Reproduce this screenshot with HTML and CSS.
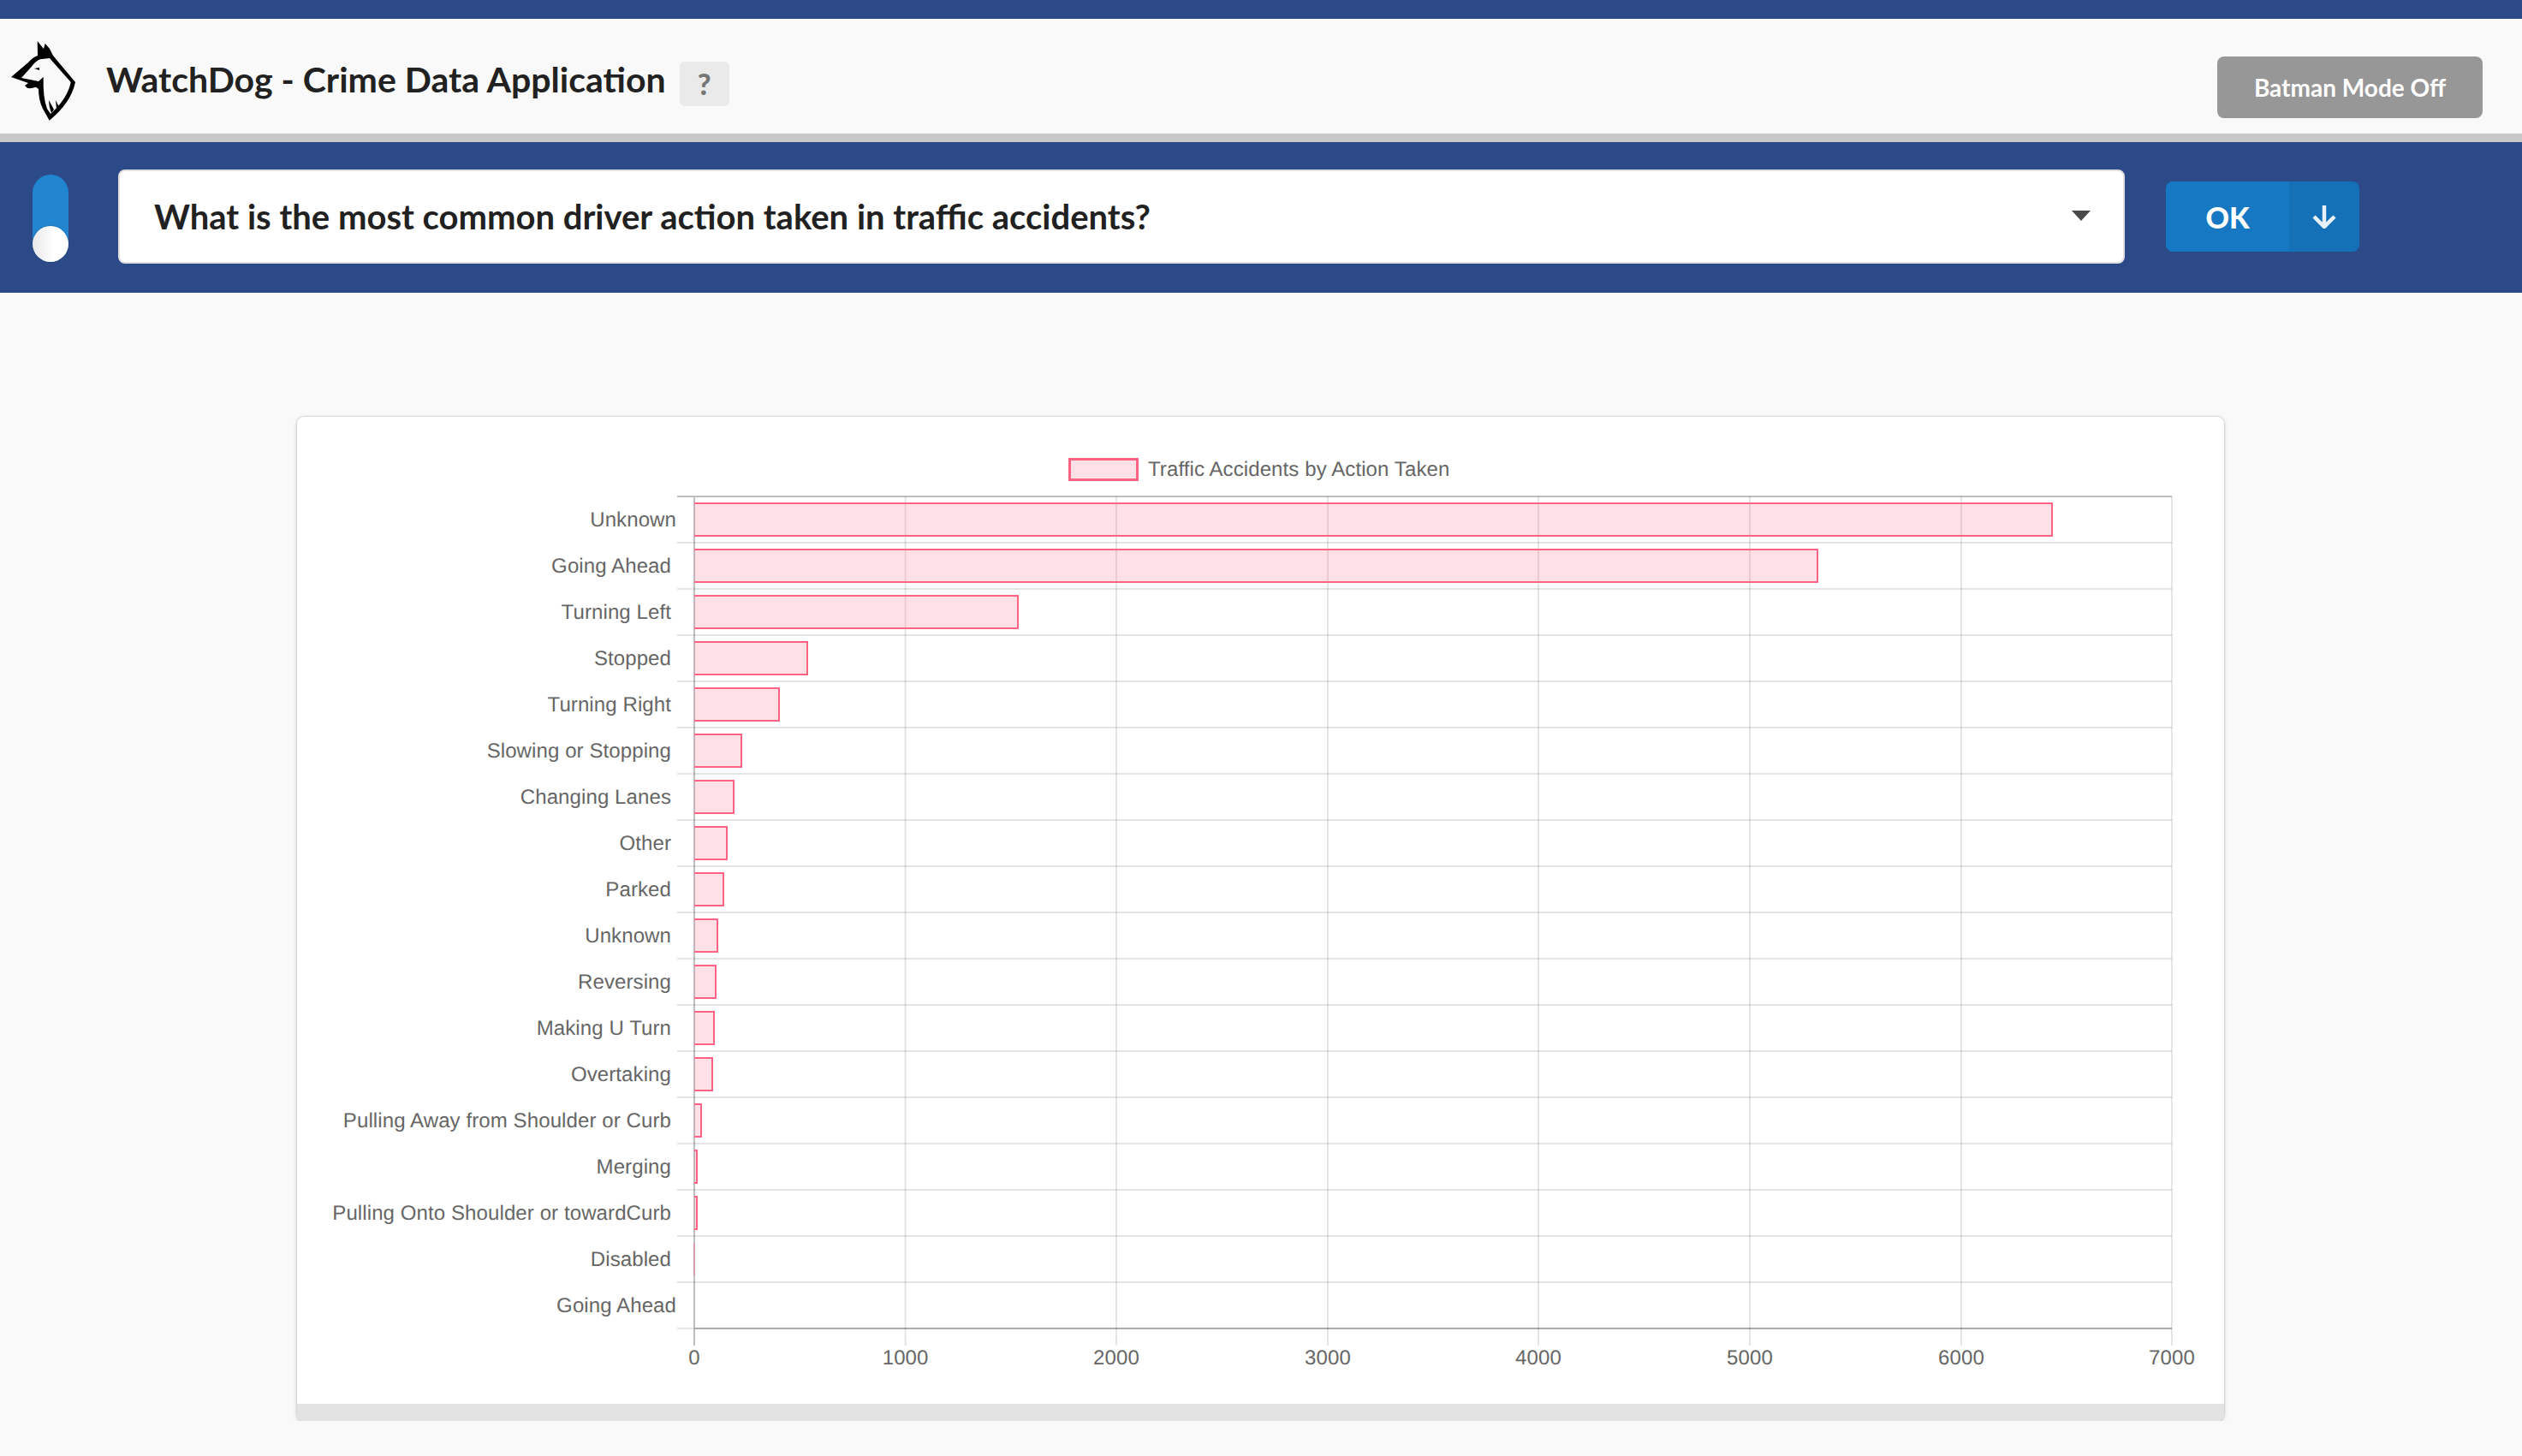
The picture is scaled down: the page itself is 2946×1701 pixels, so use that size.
FILE: index.html
```html
<!DOCTYPE html>
<html lang="en">
<head>
  <meta charset="UTF-8">
  <title>WatchDog - Crime Data Application</title>
  <link rel="stylesheet" href="styles.css">
</head>
<body>

<header class="topbar">
  <svg class="logo" viewBox="0 0 110 120" aria-hidden="true">
    <path class="logo-ink" d="M43.700 18 L51 27 L52.700 20.700 L58 27 L62 35 L88 66 Q83 90 57.700 110.700 L50 97 Q45 87 45 74 L41.700 71.700 Q36 74 31.700 72.700 L29 70 L33 67 L13 60 L33 43 Q38 37 44 35 Z"/>
    <path class="logo-face" d="M46.700 39.300 L58 38 L82.700 66 Q79 85 59 103 L55 97 Q50 84 50.700 60 L45 65 L25 61 L36.700 48 Q41 42 46.700 39.300 Z"/>
    <path class="logo-ink" d="M57 87 L63 98 L60 102 Q57 95 57 87 Z M65 87 L69 95 L66 97 Z M40 50 L46 49 L46 52 Z"/>
  </svg>
  <h1 class="app-title">WatchDog - Crime Data Application</h1>
  <span class="help-btn">?</span>
  <button class="batman-btn">Batman Mode Off</button>
</header>

<section class="toolbar">
  <div class="toggle"><span class="toggle-knob"></span></div>
  <div class="question">
    <span>What is the most common driver action taken in traffic accidents?</span>
    <i class="caret"></i>
  </div>
  <div class="ok-btn">
    <span class="ok-label">OK</span>
    <span class="ok-icon">
      <svg viewBox="0 0 28 28" aria-hidden="true"><path d="M14 1 V26 M2 14 L14 26 L26 14"/></svg>
    </span>
  </div>
</section>

<section class="card">
  <svg class="chart" viewBox="347 487 2251 1153" role="img">
    <!-- legend -->
    <rect class="bar bar-legend" x="1249.500" y="536.500" width="79" height="24"/>
    <text class="tick" x="1341" y="556">Traffic Accidents by Action Taken</text>

    <!-- grid -->
    <path class="grid" d="M1057.600 580 V1572 M1304 580 V1572 M1551 580 V1572 M1797 580 V1572 M2044 580 V1572 M2291 580 V1572 M2537 580 V1572"/>
    <path class="grid" d="M791 634 H2537 M791 688 H2537 M791 742 H2537 M791 796 H2537 M791 850 H2537 M791 904 H2537 M791 958 H2537 M791 1012 H2537 M791 1066 H2537 M791 1120 H2537 M791 1174 H2537 M791 1228 H2537 M791 1282 H2537 M791 1336 H2537 M791 1390 H2537 M791 1444 H2537 M791 1498 H2537 M791 1552 H2537"/>
    <path class="axis" d="M791 580 H2537 M811 580 V1572 M811 1552 H2537"/>

    <!-- bars -->
    <path class="bar" d="M811 588 H2397 V626 H811"/>
    <path class="bar" d="M811 642 H2123 V680 H811"/>
    <path class="bar" d="M811 696 H1189 V734 H811"/>
    <path class="bar" d="M811 750 H943 V788 H811"/>
    <path class="bar" d="M811 804 H910 V842 H811"/>
    <path class="bar" d="M811 858 H866 V896 H811"/>
    <path class="bar" d="M811 912 H857 V950 H811"/>
    <path class="bar" d="M811 966 H849 V1004 H811"/>
    <path class="bar" d="M811 1020 H845 V1058 H811"/>
    <path class="bar" d="M811 1074 H838 V1112 H811"/>
    <path class="bar" d="M811 1128 H836 V1166 H811"/>
    <path class="bar" d="M811 1182 H834 V1220 H811"/>
    <path class="bar" d="M811 1236 H832 V1274 H811"/>
    <path class="bar" d="M811 1290 H819 V1328 H811"/>
    <path class="bar" d="M811 1344 H814 V1382 H811"/>
    <path class="bar" d="M811 1398 H814 V1436 H811"/>
    <path class="bar bar-faint" d="M811 1452 V1490"/>

    <!-- y labels -->
    <g class="tick tick-end">
      <text x="790" y="615">Unknown</text>
      <text x="784" y="669">Going Ahead</text>
      <text x="784" y="723">Turning Left</text>
      <text x="784" y="777">Stopped</text>
      <text x="784" y="831">Turning Right</text>
      <text x="784" y="885">Slowing or Stopping</text>
      <text x="784" y="939">Changing Lanes</text>
      <text x="784" y="993">Other</text>
      <text x="784" y="1047">Parked</text>
      <text x="784" y="1101">Unknown</text>
      <text x="784" y="1155">Reversing</text>
      <text x="784" y="1209">Making U Turn</text>
      <text x="784" y="1263">Overtaking</text>
      <text x="784" y="1317">Pulling Away from Shoulder or Curb</text>
      <text x="784" y="1371">Merging</text>
      <text x="784" y="1425">Pulling Onto Shoulder or towardCurb</text>
      <text x="784" y="1479">Disabled</text>
      <text x="790" y="1533">Going Ahead</text>
    </g>

    <!-- x labels -->
    <g class="tick tick-mid">
      <text x="811" y="1594">0</text>
      <text x="1057.600" y="1594">1000</text>
      <text x="1304" y="1594">2000</text>
      <text x="1551" y="1594">3000</text>
      <text x="1797" y="1594">4000</text>
      <text x="2044" y="1594">5000</text>
      <text x="2291" y="1594">6000</text>
      <text x="2537" y="1594">7000</text>
    </g>
  </svg>
  <div class="card-foot"></div>
</section>

</body>
</html>
```

FILE: styles.css
```css
body { margin: 0; background: #f9f9f9; font-family: "Lato", "Liberation Sans", sans-serif; color: #212121; }

.topbar { display: flex; align-items: center; height: 134px; border-top: 22px solid #2b4a87; border-bottom: 10px solid #c8c8c8; padding: 0 46px 0 0; }
.logo { width: 110px; height: 120px; flex: none; margin-top: 2px; }
.logo-ink { fill: #000; }
.logo-face { fill: #f9f9f9; }
.app-title { margin: 7px 0 0 14px; font-size: 41px; font-weight: 700; line-height: 1; }
.help-btn { width: 58px; height: 52px; margin: 18px 0 0 16px; border-radius: 6px; background: #eaeaea; color: #767676; font-size: 34px; font-weight: 900; line-height: 52px; text-align: center; }
.batman-btn { width: 310px; height: 72px; margin: 26px 0 0 auto; border: 0; border-radius: 8px; background: #979797; color: #fff; font-family: inherit; font-size: 28px; font-weight: 700; }

.toolbar { display: flex; align-items: center; box-sizing: border-box; height: 176px; padding-bottom: 2px; background: #2b4a87; }
.toggle { position: relative; width: 42px; height: 102px; margin: 4px 0 0 38px; border-radius: 21px; background: #2185d0; }
.toggle-knob { position: absolute; left: 0; bottom: 0; width: 42px; height: 42px; border-radius: 50%; background: linear-gradient(90deg, #e8e8e8, #fff 60%); box-shadow: 0 0 0 1px rgba(34,36,38,.15); }
.question { display: flex; align-items: center; justify-content: space-between; box-sizing: border-box; width: 2344px; height: 110px; margin-left: 58px; padding: 0 38px 0 40px; background: #fff; border: 2px solid #e0e0e0; border-radius: 8px; font-size: 40px; font-weight: 700; }
.caret { width: 0; height: 0; margin-top: -2px; border-left: 11px solid transparent; border-right: 11px solid transparent; border-top: 12px solid #4a4a4a; }
.ok-btn { display: flex; width: 226px; height: 82px; margin-left: 48px; border-radius: 8px; overflow: hidden; color: #fff; font-size: 34px; font-weight: 900; }
.ok-label { display: flex; align-items: center; justify-content: center; width: 144px; background: #1678c2; }
.ok-icon { display: flex; align-items: center; justify-content: center; flex: 1; background: #1470b7; }
.ok-icon svg { width: 28px; height: 28px; }
.ok-icon path { fill: none; stroke: #e8f1f8; stroke-width: 4.500; }

.card { position: relative; width: 2251px; margin: 145px 0 0 347px; background: #fff; border-radius: 8px; box-shadow: 0 0 3px rgba(0,0,0,.28), 0 3px 6px rgba(0,0,0,.1); }
.chart { display: block; width: 2251px; height: 1153px; }
.card-foot { height: 20px; background: #e3e3e3; border-radius: 0 0 8px 8px; }

.grid { fill: none; stroke: rgba(0,0,0,.1); stroke-width: 2; }
.axis { fill: none; stroke: rgba(0,0,0,.25); stroke-width: 2; }
.bar { fill: rgba(255,99,132,.2); stroke: #ff6384; stroke-width: 2; }
.bar-legend { stroke-width: 3; }
.bar-faint { stroke-opacity: .35; }
.tick { font-family: "Liberation Sans", Arial, sans-serif; font-size: 24px; letter-spacing: .1px; fill: #666; text-rendering: geometricPrecision; }
.tick-end { text-anchor: end; }
.tick-mid { text-anchor: middle; }
```
